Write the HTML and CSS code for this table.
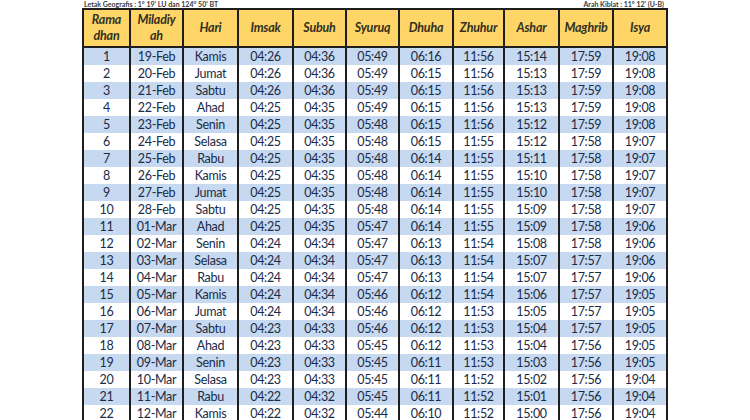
FILE: index.html
```html
<!DOCTYPE html>
<html>
<head>
<meta charset="utf-8">
<link rel="stylesheet" href="styles.css">
</head>
<body>
<div class="page">
  <div class="meta">
    <span>Letak Geografis : 1° 19' LU dan 124° 50' BT</span>
    <span>Arah Kiblat : 11° 12' (U-B)</span>
  </div>
  <table class="jadwal">
    <colgroup>
      <col class="c-ram"><col class="c-mil"><col class="c-hari"><col class="c-t1"><col class="c-t2"><col class="c-t3"><col class="c-t4"><col class="c-t5"><col class="c-t6"><col class="c-t7"><col class="c-t8">
    </colgroup>
    <thead>
      <tr>
        <th>Rama<br>dhan</th><th>Miladiy<br>ah</th><th>Hari</th><th>Imsak</th><th>Subuh</th><th>Syuruq</th><th>Dhuha</th><th>Zhuhur</th><th>Ashar</th><th>Maghrib</th><th>Isya</th>
      </tr>
    </thead>
    <tbody>
      <tr><td>1</td><td>19-Feb</td><td>Kamis</td><td>04:26</td><td>04:36</td><td>05:49</td><td>06:16</td><td>11:56</td><td>15:14</td><td>17:59</td><td>19:08</td></tr>
      <tr><td>2</td><td>20-Feb</td><td>Jumat</td><td>04:26</td><td>04:36</td><td>05:49</td><td>06:15</td><td>11:56</td><td>15:13</td><td>17:59</td><td>19:08</td></tr>
      <tr><td>3</td><td>21-Feb</td><td>Sabtu</td><td>04:26</td><td>04:36</td><td>05:49</td><td>06:15</td><td>11:56</td><td>15:13</td><td>17:59</td><td>19:08</td></tr>
      <tr><td>4</td><td>22-Feb</td><td>Ahad</td><td>04:25</td><td>04:35</td><td>05:49</td><td>06:15</td><td>11:56</td><td>15:13</td><td>17:59</td><td>19:08</td></tr>
      <tr><td>5</td><td>23-Feb</td><td>Senin</td><td>04:25</td><td>04:35</td><td>05:48</td><td>06:15</td><td>11:56</td><td>15:12</td><td>17:59</td><td>19:08</td></tr>
      <tr><td>6</td><td>24-Feb</td><td>Selasa</td><td>04:25</td><td>04:35</td><td>05:48</td><td>06:15</td><td>11:55</td><td>15:12</td><td>17:58</td><td>19:07</td></tr>
      <tr><td>7</td><td>25-Feb</td><td>Rabu</td><td>04:25</td><td>04:35</td><td>05:48</td><td>06:14</td><td>11:55</td><td>15:11</td><td>17:58</td><td>19:07</td></tr>
      <tr><td>8</td><td>26-Feb</td><td>Kamis</td><td>04:25</td><td>04:35</td><td>05:48</td><td>06:14</td><td>11:55</td><td>15:10</td><td>17:58</td><td>19:07</td></tr>
      <tr><td>9</td><td>27-Feb</td><td>Jumat</td><td>04:25</td><td>04:35</td><td>05:48</td><td>06:14</td><td>11:55</td><td>15:10</td><td>17:58</td><td>19:07</td></tr>
      <tr><td>10</td><td>28-Feb</td><td>Sabtu</td><td>04:25</td><td>04:35</td><td>05:48</td><td>06:14</td><td>11:55</td><td>15:09</td><td>17:58</td><td>19:07</td></tr>
      <tr><td>11</td><td>01-Mar</td><td>Ahad</td><td>04:25</td><td>04:35</td><td>05:47</td><td>06:14</td><td>11:55</td><td>15:09</td><td>17:58</td><td>19:06</td></tr>
      <tr><td>12</td><td>02-Mar</td><td>Senin</td><td>04:24</td><td>04:34</td><td>05:47</td><td>06:13</td><td>11:54</td><td>15:08</td><td>17:58</td><td>19:06</td></tr>
      <tr><td>13</td><td>03-Mar</td><td>Selasa</td><td>04:24</td><td>04:34</td><td>05:47</td><td>06:13</td><td>11:54</td><td>15:07</td><td>17:57</td><td>19:06</td></tr>
      <tr><td>14</td><td>04-Mar</td><td>Rabu</td><td>04:24</td><td>04:34</td><td>05:47</td><td>06:13</td><td>11:54</td><td>15:07</td><td>17:57</td><td>19:06</td></tr>
      <tr><td>15</td><td>05-Mar</td><td>Kamis</td><td>04:24</td><td>04:34</td><td>05:46</td><td>06:12</td><td>11:54</td><td>15:06</td><td>17:57</td><td>19:05</td></tr>
      <tr><td>16</td><td>06-Mar</td><td>Jumat</td><td>04:24</td><td>04:34</td><td>05:46</td><td>06:12</td><td>11:53</td><td>15:05</td><td>17:57</td><td>19:05</td></tr>
      <tr><td>17</td><td>07-Mar</td><td>Sabtu</td><td>04:23</td><td>04:33</td><td>05:46</td><td>06:12</td><td>11:53</td><td>15:04</td><td>17:57</td><td>19:05</td></tr>
      <tr><td>18</td><td>08-Mar</td><td>Ahad</td><td>04:23</td><td>04:33</td><td>05:45</td><td>06:12</td><td>11:53</td><td>15:04</td><td>17:56</td><td>19:05</td></tr>
      <tr><td>19</td><td>09-Mar</td><td>Senin</td><td>04:23</td><td>04:33</td><td>05:45</td><td>06:11</td><td>11:53</td><td>15:03</td><td>17:56</td><td>19:05</td></tr>
      <tr><td>20</td><td>10-Mar</td><td>Selasa</td><td>04:23</td><td>04:33</td><td>05:45</td><td>06:11</td><td>11:52</td><td>15:02</td><td>17:56</td><td>19:04</td></tr>
      <tr><td>21</td><td>11-Mar</td><td>Rabu</td><td>04:22</td><td>04:32</td><td>05:45</td><td>06:11</td><td>11:52</td><td>15:01</td><td>17:56</td><td>19:04</td></tr>
      <tr><td>22</td><td>12-Mar</td><td>Kamis</td><td>04:22</td><td>04:32</td><td>05:44</td><td>06:10</td><td>11:52</td><td>15:00</td><td>17:56</td><td>19:04</td></tr>
    </tbody>
  </table>
</div>
</body>
</html>
```

FILE: styles.css
```css
html, body {
  margin: 0;
  padding: 0;
  background: #ffffff;
}

body {
  font-family: Lato, "Open Sans", sans-serif;
  overflow: hidden;
}

.page {
  padding-left: 82px;
  width: 584px;
}

.meta {
  height: 8px;
  display: flex;
  justify-content: space-between;
  align-items: center;
  font-size: 7px;
  line-height: 8px;
  font-weight: 700;
  color: #3a3a3a;
  padding: 0 2px;
}

.jadwal {
  border-collapse: collapse;
  table-layout: fixed;
  width: 584px;
  border: 2px solid #1e1e1e;
}

.c-ram { width: 47px; }
.c-mil { width: 53px; }
.c-hari { width: 55px; }
.c-t1 { width: 55px; }
.c-t2 { width: 53px; }
.c-t3 { width: 53px; }
.c-t4 { width: 54px; }
.c-t5 { width: 51px; }
.c-t6 { width: 55px; }
.c-t7 { width: 54px; }
.c-t8 { width: 54px; }

.jadwal th {
  background: #fdd667;
  height: 36px;
  padding: 0;
  font-style: italic;
  font-weight: 700;
  font-size: 12.5px;
  line-height: 16px;
  color: #33301f;
  text-align: center;
  vertical-align: middle;
  border-left: 2px solid #1e1e1e;
  border-right: 2px solid #1e1e1e;
  border-bottom: 2px solid #1e1e1e;
  letter-spacing: -0.2px;
}

.jadwal td {
  height: 17px;
  padding: 0;
  font-size: 12.5px;
  line-height: 17px;
  color: #1a2b47;
  text-align: center;
  border-left: 2px solid #1e1e1e;
  border-right: 2px solid #1e1e1e;
  letter-spacing: -0.3px;
}

.jadwal tbody tr:nth-child(odd) td {
  background: #c6d9f0;
}
```
